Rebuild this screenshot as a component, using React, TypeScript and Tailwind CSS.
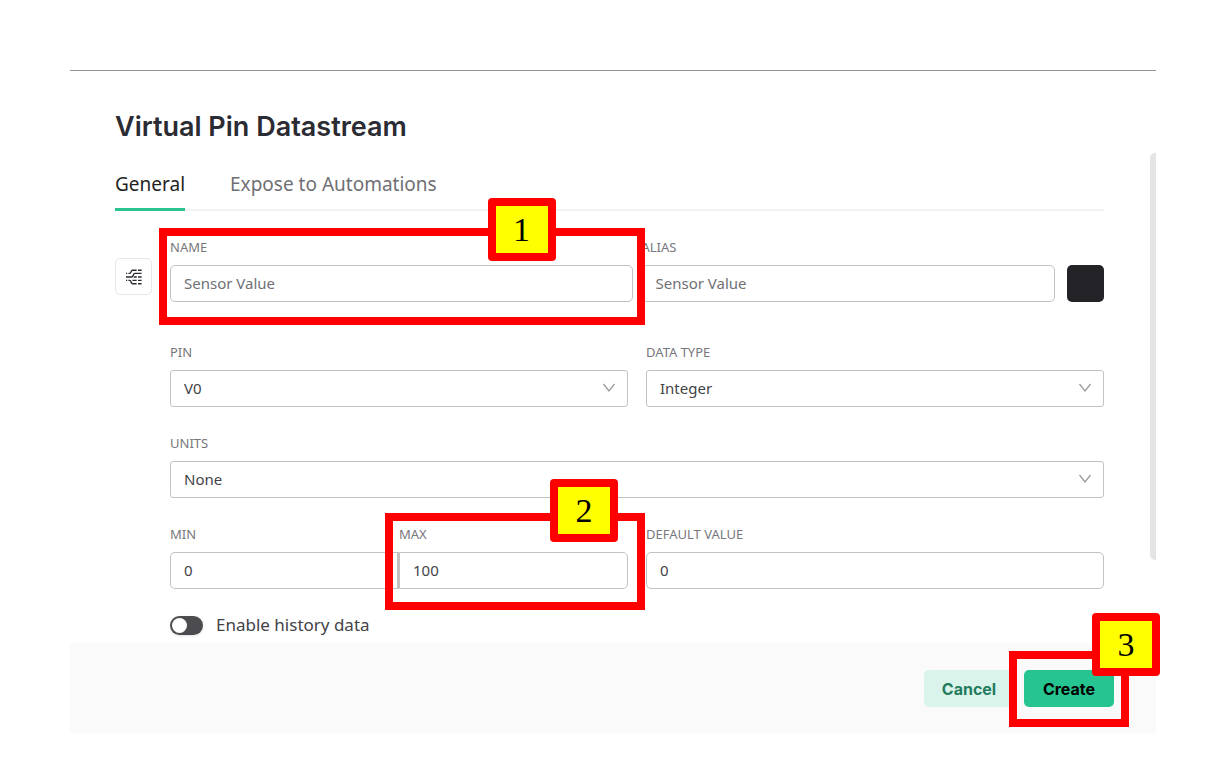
import React from "react";

const uiFont = "font-['Noto_Sans','Open_Sans',sans-serif]";
const labelClass = "block text-[13px] leading-5 text-[#77777b]";
const boxClass =
  "h-[37px] w-full min-w-0 border border-[#c2c2c2] bg-white pb-0.5 pl-[13px] pr-3 text-[15px] leading-5 outline-none";

function Callout({ n, box, badge }: { n: number; box: string; badge: string }) {
  return (
    <div className={`pointer-events-none absolute z-10 border-8 border-[#ff0000] ${box}`}>
      <span
        className={`absolute flex h-[63px] w-[68px] items-center justify-center rounded border-8 border-[#ff0000] bg-[#ffff00] font-['Liberation_Serif',serif] text-[34px] font-normal leading-none text-black ${badge}`}
      >
        {n}
      </span>
    </div>
  );
}

function SelectField({ id, label, value }: { id: string; label: string; value: string }) {
  return (
    <div className="flex flex-col gap-2">
      <label htmlFor={id} className={labelClass}>{label}</label>
      <div className="relative">
        <select id={id} defaultValue={value} className={`${boxClass} appearance-none rounded-[3px] text-[#434347]`}>
          <option>{value}</option>
        </select>
        <svg
          className="pointer-events-none absolute right-3 top-3 h-3 w-3.5"
          viewBox="0 0 14 12"
          fill="none"
          stroke="#9b9b9b"
          strokeWidth="1.3"
        >
          <path d="M1.5 2 L7 9 L12.5 2" />
        </svg>
      </div>
    </div>
  );
}

function TextField({
  id,
  label,
  value,
  className,
}: {
  id: string;
  label: string;
  value: string;
  className: string;
}) {
  return (
    <div className="flex min-w-0 flex-1 flex-col gap-2">
      <label htmlFor={id} className={labelClass}>{label}</label>
      <input id={id} type="text" defaultValue={value} className={`${boxClass} ${className}`} />
    </div>
  );
}

function StreamIcon() {
  return (
    <svg className="h-4 w-4" viewBox="0 0 16 16" fill="none" stroke="#2a2a30" strokeWidth="1.4">
      <path d="M0 4.4h1.2M2.4 4.4h1.4c1.6 0 1-3.2 2.8-3.2h4M12 1.2h3.6" />
      <path d="M0 8h5.4c2.4 0 1.4-3.6 3.6-3.6h6.6" />
      <path d="M7.8 8h3M12 8h3.6" />
      <path d="M0 11.4h1.2M2.4 11.4h1.4c1.6 0 1 3.4 2.8 3.4h4M12 14.8h3.6" />
      <path d="M6.4 11.4h4.2M12 11.4h3.6" />
    </svg>
  );
}

export default function App() {
  return (
    <main className={`min-h-screen bg-white pb-9 pl-[70px] pr-[50px] pt-[70px] ${uiFont}`}>
      <section className="border-t border-[#939393]">
        <h1 className="pb-2 pl-[45px] pt-[38px] font-['Inter',sans-serif] text-[27px] font-semibold leading-9 text-[#2b2b33]">
          Virtual Pin Datastream
        </h1>

        <div className="flex items-start">
          <div className="min-w-0 flex-1 pb-1 pl-[45px] pr-[46px] pt-[17px]">
            <nav className="flex gap-[45px] text-[19px] leading-7 text-[#6f6f74] shadow-[inset_0_-2px_0_#f2f2f2]">
              <button type="button" className="border-b-[3px] border-[#2ac391] pb-2.5 text-[#1f1f24]">General</button>
              <button type="button" className="border-b-[3px] border-transparent pb-2.5">Expose to Automations</button>
            </nav>

            <form className="flex items-start gap-[18px] pt-[26px]">
              <button
                type="button"
                aria-label="Icon"
                className="mt-[21px] flex h-[37px] w-[37px] shrink-0 items-center justify-center rounded-[5px] border border-[#e6e6e6]"
              >
                <StreamIcon />
              </button>

              <div className="min-w-0 flex-1">
                <div className="mb-10 grid grid-cols-2 gap-[9px]">
                  <div className="relative">
                    <TextField id="name" label="NAME" value="Sensor Value" className="rounded-[5px] text-[#6f6f74]" />
                    <Callout n={1} box="-left-[11px] -right-3 -top-[9px] -bottom-[23px]" badge="-top-[38px] right-[81px]" />
                  </div>
                  <div className="flex items-end gap-3">
                    <TextField id="alias" label="ALIAS" value="Sensor Value" className="rounded-[5px] text-[#6f6f74]" />
                    <button type="button" aria-label="Color" className="h-[37px] w-[37px] shrink-0 rounded-[5px] bg-[#222227]" />
                  </div>
                </div>

                <div className="mb-[26px] grid grid-cols-2 gap-[18px]">
                  <SelectField id="pin" label="PIN" value="V0" />
                  <SelectField id="type" label="DATA TYPE" value="Integer" />
                </div>

                <div className="mb-[26px]">
                  <SelectField id="units" label="UNITS" value="None" />
                </div>

                <div className="mb-[22px] grid grid-cols-2 gap-[18px]">
                  <div className="grid grid-cols-2">
                    <TextField id="min" label="MIN" value="0" className="rounded-l-[5px] border-r-2 text-[#434347]" />
                    <div className="relative">
                      <TextField id="max" label="MAX" value="100" className="rounded-r-[5px] text-[#434347]" />
                      <Callout n={2} box="-left-3.5 -right-[17px] -top-[11px] -bottom-[21px]" badge="-top-[42px] right-[19px]" />
                    </div>
                  </div>
                  <TextField id="default" label="DEFAULT VALUE" value="0" className="rounded-[5px] text-[#434347]" />
                </div>

                <label className="flex w-fit items-center gap-[13px] text-[17px] leading-7 text-[#434347]">
                  <input
                    type="checkbox"
                    role="switch"
                    className="h-[19px] w-[33px] appearance-none rounded-full bg-[#4c4c50] p-0.5 shadow-sm before:block before:h-[15px] before:w-[15px] before:rounded-full before:bg-white checked:before:translate-x-3.5"
                  />
                  Enable history data
                </label>
              </div>
            </form>
          </div>

          <div className="h-[407px] w-1.5 shrink-0 rounded-l-[5px] bg-[#e4e4e4]" />
        </div>

        <footer className="flex justify-end gap-2.5 bg-[#fafafa] pb-[26px] pr-[42px] pt-[27px] font-['Inter',sans-serif] text-base font-bold">
          <button type="button" className="h-[37px] w-[90px] rounded-[5px] bg-[#dbf4eb] text-[#247b5e]">Cancel</button>
          <div className="relative">
            <button type="button" className="h-[37px] w-[90px] rounded-[5px] bg-[#26c490] text-black">Create</button>
            <Callout n={3} box="-left-[15px] -right-[15px] -top-[19px] -bottom-5" badge="-top-[46px] -right-[39px]" />
          </div>
        </footer>
      </section>
    </main>
  );
}
